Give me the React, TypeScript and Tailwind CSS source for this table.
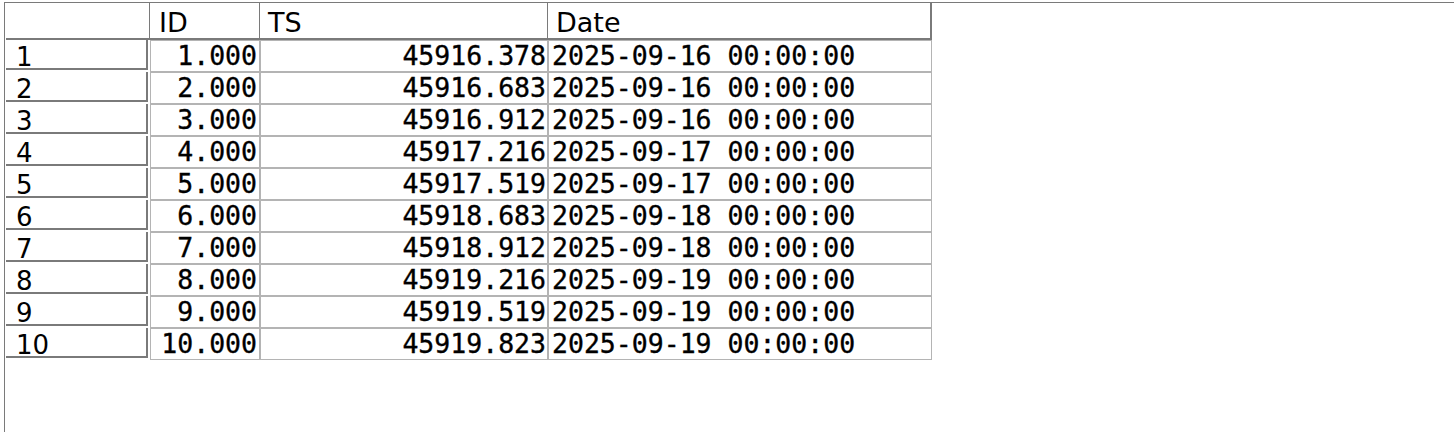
const rows: [string, string, string, string][] = [
  ["1", "1.000", "45916.378", "2025-09-16 00:00:00"],
  ["2", "2.000", "45916.683", "2025-09-16 00:00:00"],
  ["3", "3.000", "45916.912", "2025-09-16 00:00:00"],
  ["4", "4.000", "45917.216", "2025-09-17 00:00:00"],
  ["5", "5.000", "45917.519", "2025-09-17 00:00:00"],
  ["6", "6.000", "45918.683", "2025-09-18 00:00:00"],
  ["7", "7.000", "45918.912", "2025-09-18 00:00:00"],
  ["8", "8.000", "45919.216", "2025-09-19 00:00:00"],
  ["9", "9.000", "45919.519", "2025-09-19 00:00:00"],
  ["10", "10.000", "45919.823", "2025-09-19 00:00:00"],
];

const sans = "font-['DejaVu_Sans',Verdana,sans-serif]";
const mono = "font-['DejaVu_Sans_Mono','Liberation_Mono',monospace] [-webkit-text-stroke:0.35px_black]";

export default function App() {
  return (
    <div className="h-[432px] w-[1454px] overflow-hidden bg-white text-black">
      <div className="ml-[4px] mt-[2px] h-[430px] border-l border-t border-[#7a7a7a]">
        <div className="grid grid-cols-[145px_110px_288px_384px] grid-rows-[37px_repeat(10,32px)]">
          {/* header row */}
          <div className="pl-[1px]">
            <div className="h-full border-b-2 border-r border-[#7a7a7a]" />
          </div>
          <div className={`flex items-center border-b-2 border-r border-[#7a7a7a] pl-[9px] pt-[5px] text-[27px] ${sans}`}>ID</div>
          <div className={`flex items-center border-b-2 border-r border-[#7a7a7a] pl-[8px] pt-[5px] text-[27px] ${sans}`}>TS</div>
          <div className={`flex items-center border-b-2 border-r-2 border-[#7a7a7a] pl-[8px] pt-[5px] text-[27px] ${sans}`}>Date</div>

          {rows.map(([n, id, ts, date]) => (
            <Row key={n} n={n} id={id} ts={ts} date={date} />
          ))}
        </div>
      </div>
    </div>
  );
}

function Row({ n, id, ts, date }: { n: string; id: string; ts: string; date: string }) {
  return (
    <>
      <div className="pb-[2px] pl-[1px] pr-[2px]">
        <div className={`flex h-full items-center border-b-2 border-r-2 border-[#7a7a7a] pl-[10px] pt-[6px] text-[26px] ${sans}`}>
          {n}
        </div>
      </div>
      <div className={`flex items-center justify-end border border-[#b4b4b4] pr-[2px] text-[26.5px] ${mono}`}>{id}</div>
      <div className={`flex items-center justify-end border border-[#b4b4b4] pr-[1px] text-[26.5px] ${mono}`}>{ts}</div>
      <div className={`flex items-center whitespace-pre border border-[#b4b4b4] pl-[3px] text-[26.5px] ${mono}`}>{date}</div>
    </>
  );
}
